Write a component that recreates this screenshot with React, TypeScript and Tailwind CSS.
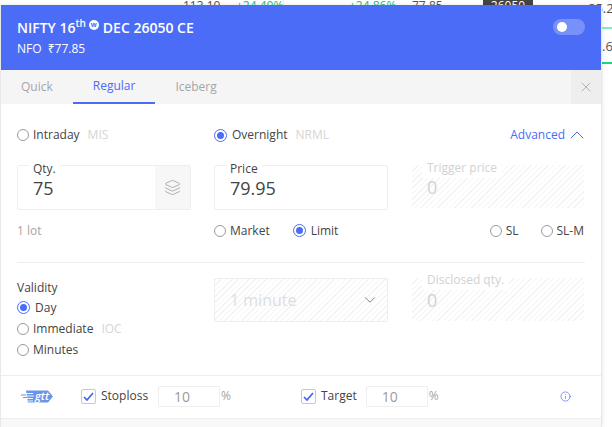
import { ChevronDown, ChevronUp, Info, Layers, X } from 'lucide-react'

const font = "font-['Open_Sans','Noto_Sans',sans-serif]"
const hatch =
  'bg-[repeating-linear-gradient(135deg,#f3f3f3_0px,#f3f3f3_1px,#ffffff_1px,#ffffff_4px)]'

function Radio({ checked = false, label, tag }: { checked?: boolean; label: string; tag?: string }) {
  return (
    <label className="flex items-center h-[21px] text-[12px] text-[#444444]">
      {checked ? (
        <span className="w-[13px] h-[13px] mr-[5px] rounded-full border border-[#4a6cf7] flex items-center justify-center">
          <span className="w-[7px] h-[7px] rounded-full bg-[#4a6cf7]" />
        </span>
      ) : (
        <span className="w-[12px] h-[12px] mr-[4px] rounded-full border border-[#9b9b9b]" />
      )}
      <span>{label}</span>
      {tag && <span className="ml-2 text-[12px] text-[#d5d5d5]">{tag}</span>}
    </label>
  )
}

function Field({ label, value, children }: { label: string; value: string; children?: React.ReactNode }) {
  return (
    <div className="relative h-[45px] border border-[#eeeeee] rounded-[2px] flex">
      <span className="absolute -top-[5px] left-[11px] bg-white px-[4px] text-[12px] leading-[16px] text-[#444444]">
        {label}
      </span>
      <span className="flex-1 pl-[15px] pt-[10px] text-[18px] leading-[24px] text-[#444444]">{value}</span>
      {children}
    </div>
  )
}

function DisabledField({ label, labelTop }: { label: string; labelTop: string }) {
  return (
    <div className={`relative h-[43px] ml-px ${hatch}`}>
      <span className={`absolute ${labelTop} left-[10px] h-[18px] bg-white px-[5px] text-[12px] leading-[16px] text-[#d2d2d2]`}>
        {label}
      </span>
      <span className="block pl-[15px] pt-[10px] text-[18px] leading-[24px] text-[#d2d2d2]">0</span>
    </div>
  )
}

function Check({ label, value, inputGap }: { label: string; value: string; inputGap: string }) {
  return (
    <div className="flex items-center text-[12px] text-[#444444]">
      <span className="w-[15px] h-[15px] border border-[#c8c8c8] rounded-[2px] flex items-center justify-center">
        <svg width="11" height="9" viewBox="0 0 11 9" fill="none">
          <path d="M1 5l3 3 6-7" stroke="#3f66f2" strokeWidth="1.7" />
        </svg>
      </span>
      <span className="ml-[5px]">{label}</span>
      <span className={`${inputGap} w-[62px] h-[21px] border border-[#eeeeee] rounded-[2px] pl-[15px] text-[14px] leading-[20px] text-[#9b9b9b]`}>
        {value}
      </span>
      <span className="ml-px text-[12px] text-[#a5a5a5]">%</span>
    </div>
  )
}

function GttLogo() {
  return (
    <div className="relative w-[33px] h-[13px]">
      <svg width="33" height="13" viewBox="0 0 33 13" className="absolute inset-0">
        <path d="M5 0.500h22l5 6-5 6H7z" fill="#6b95e8" />
        <path d="M4 3.500h8M6 6h7M5 8.500h7M7 11h5" stroke="#ffffff" strokeWidth="0.9" />
        <path d="M0 5h5M2 7.500h4" stroke="#6b95e8" strokeWidth="1.2" />
      </svg>
      <span className="absolute left-[14px] -top-[2px] text-[11px] leading-[15px] italic font-semibold text-white">gtt</span>
    </div>
  )
}

export default function App() {
  return (
    <div className={`relative w-[612px] h-[427px] overflow-hidden bg-white ${font}`}>
      {/* table behind the order window */}
      <div className="absolute top-0 left-0 w-full h-[5px] overflow-hidden text-[12px] leading-[12px] text-[#555555]">
        <span className="absolute left-[183px] top-0">113.10</span>
        <span className="absolute left-[236px] top-0 text-[#19c37d]">+24.40%</span>
        <span className="absolute left-[283px] top-0 w-px h-[5px] bg-[#eeeeee]" />
        <span className="absolute left-[349px] top-0 text-[#19c37d]">+24.86%</span>
        <span className="absolute left-[412px] top-0">77.85</span>
        <span className="absolute left-[483px] top-0 w-[50px] h-[5px] bg-[#444444] text-white text-center">26050</span>
      </div>
      <span className="absolute left-[588px] top-0 text-[13px] leading-[16px] text-[#555555]">85.2</span>
      <span className="absolute left-[602px] top-[38px] text-[13px] leading-[16px] text-[#555555]">.6</span>
      <span className="absolute left-[602px] top-[27px] w-[10px] h-[2px] bg-[#7ff0b4]" />
      <span className="absolute left-[602px] top-[62px] w-[10px] h-[2px] bg-[#19d67f]" />

      {/* order window */}
      <div className="absolute left-0 top-[5px] w-[602px] h-[422px] bg-white border-x border-[#e8e8e8] shadow-[0_0_4px_rgba(0,0,0,0.12)]">
        <header className="h-[65px] bg-[#4a6cf7] text-white px-4 pt-[11px] flex justify-between">
          <div>
            <div className="flex items-baseline h-[24px] text-[14px] font-semibold leading-[24px]">
              NIFTY 16
              <sup className="text-[10px] font-semibold leading-none -top-[6px] relative align-baseline">th</sup>
              <span className="self-center w-[10px] h-[10px] ml-[3px] mr-[4px] -mt-[6px] rounded-full bg-white text-[#4a6cf7] text-[7px] leading-[10px] text-center font-bold">
                w
              </span>
              DEC 26050 CE
            </div>
            <div className="text-[12px] leading-[16px] mt-px">
              NFO <span className="ml-[3px]">₹77.85</span>
            </div>
          </div>
          <span className="w-[32px] h-[16px] mt-[3px] rounded-full bg-white/25 flex items-center pl-[4px]">
            <span className="w-[10px] h-[10px] rounded-full bg-white" />
          </span>
        </header>

        <nav className="h-[34px] bg-[#f5f5f5] flex justify-between text-[12px]">
          <div className="flex text-[#a5a5a5]">
            <span className="px-5 leading-[34px]">Quick</span>
            <span className="px-5 leading-[32px] h-[34px] text-[#4a6cf7] border-b-2 border-[#4a6cf7]">Regular</span>
            <span className="px-5 leading-[34px]">Iceberg</span>
          </div>
          <span className="w-[30px] bg-[#eeeeee] flex items-center justify-center text-[#a5a5a5]">
            <X size={16} strokeWidth={1.2} />
          </span>
        </nav>

        <div className="px-4 pt-[19px]">
          <div className="grid grid-cols-[174px_174px_173px] gap-x-[23px] items-center h-[21px]">
            <div className="flex"><Radio label="Intraday" tag="MIS" /></div>
            <div className="flex"><Radio checked label="Overnight" tag="NRML" /></div>
            <div className="flex items-center justify-end text-[12px] text-[#4a6cf7] -mr-[5px]">
              Advanced <ChevronUp size={24} strokeWidth={1} />
            </div>
          </div>

          <div className="grid grid-cols-[174px_174px_173px] gap-x-[23px] mt-[21px]">
            <Field label="Qty." value="75">
              <span className="w-[35px] bg-[#f7f7f7] flex items-center justify-center text-[#9b9b9b]">
                <Layers size={17} strokeWidth={1.1} />
              </span>
            </Field>
            <Field label="Price" value="79.95" />
            <DisabledField label="Trigger price" labelTop="-top-[5px]" />
          </div>

          <div className="grid grid-cols-[174px_174px_173px] gap-x-[23px] mt-[10px] items-center h-[21px]">
            <span className="text-[12px] text-[#a5a5a5]">1 lot</span>
            <div className="flex gap-[23px]">
              <Radio label="Market" />
              <Radio checked label="Limit" />
            </div>
            <div className="flex justify-end gap-[22px] ml-px">
              <Radio label="SL" />
              <Radio label="SL-M" />
            </div>
          </div>

          <div className="h-px bg-[#eeeeee] mt-[21px]" />

          <div className="grid grid-cols-[174px_174px_173px] gap-x-[23px] mt-[15px] h-[97px]">
            <div className="pt-px">
              <div className="text-[12px] leading-[18px] text-[#444444]">Validity</div>
              <div>
                <Radio checked label="Day" />
                <Radio label="Immediate" tag="IOC" />
                <Radio label="Minutes" />
              </div>
            </div>
            <div className={`h-[44px] border border-[#eeeeee] rounded-[2px] flex items-center justify-between pl-[15px] pr-[8px] text-[16px] text-[#dedede] ${hatch}`}>
              1 minute
              <ChevronDown size={18} strokeWidth={1} className="text-[#555555]" />
            </div>
            <DisabledField label="Disclosed qty." labelTop="-top-[6px]" />
          </div>
        </div>

        <footer className="h-[44px] pb-[2px] border-t border-b border-[#eeeeee] flex items-center">
          <div className="ml-[20px] w-[60px]"><GttLogo /></div>
          <div className="w-[220px]"><Check label="Stoploss" value="10" inputGap="ml-[10px]" /></div>
          <div className="w-[259px]"><Check label="Target" value="10" inputGap="ml-[9px]" /></div>
          <Info size={11} strokeWidth={1.5} className="text-[#4a6cf7]" />
        </footer>
        <div className="h-[8px] bg-[#f8f8f8]" />
      </div>
    </div>
  )
}
